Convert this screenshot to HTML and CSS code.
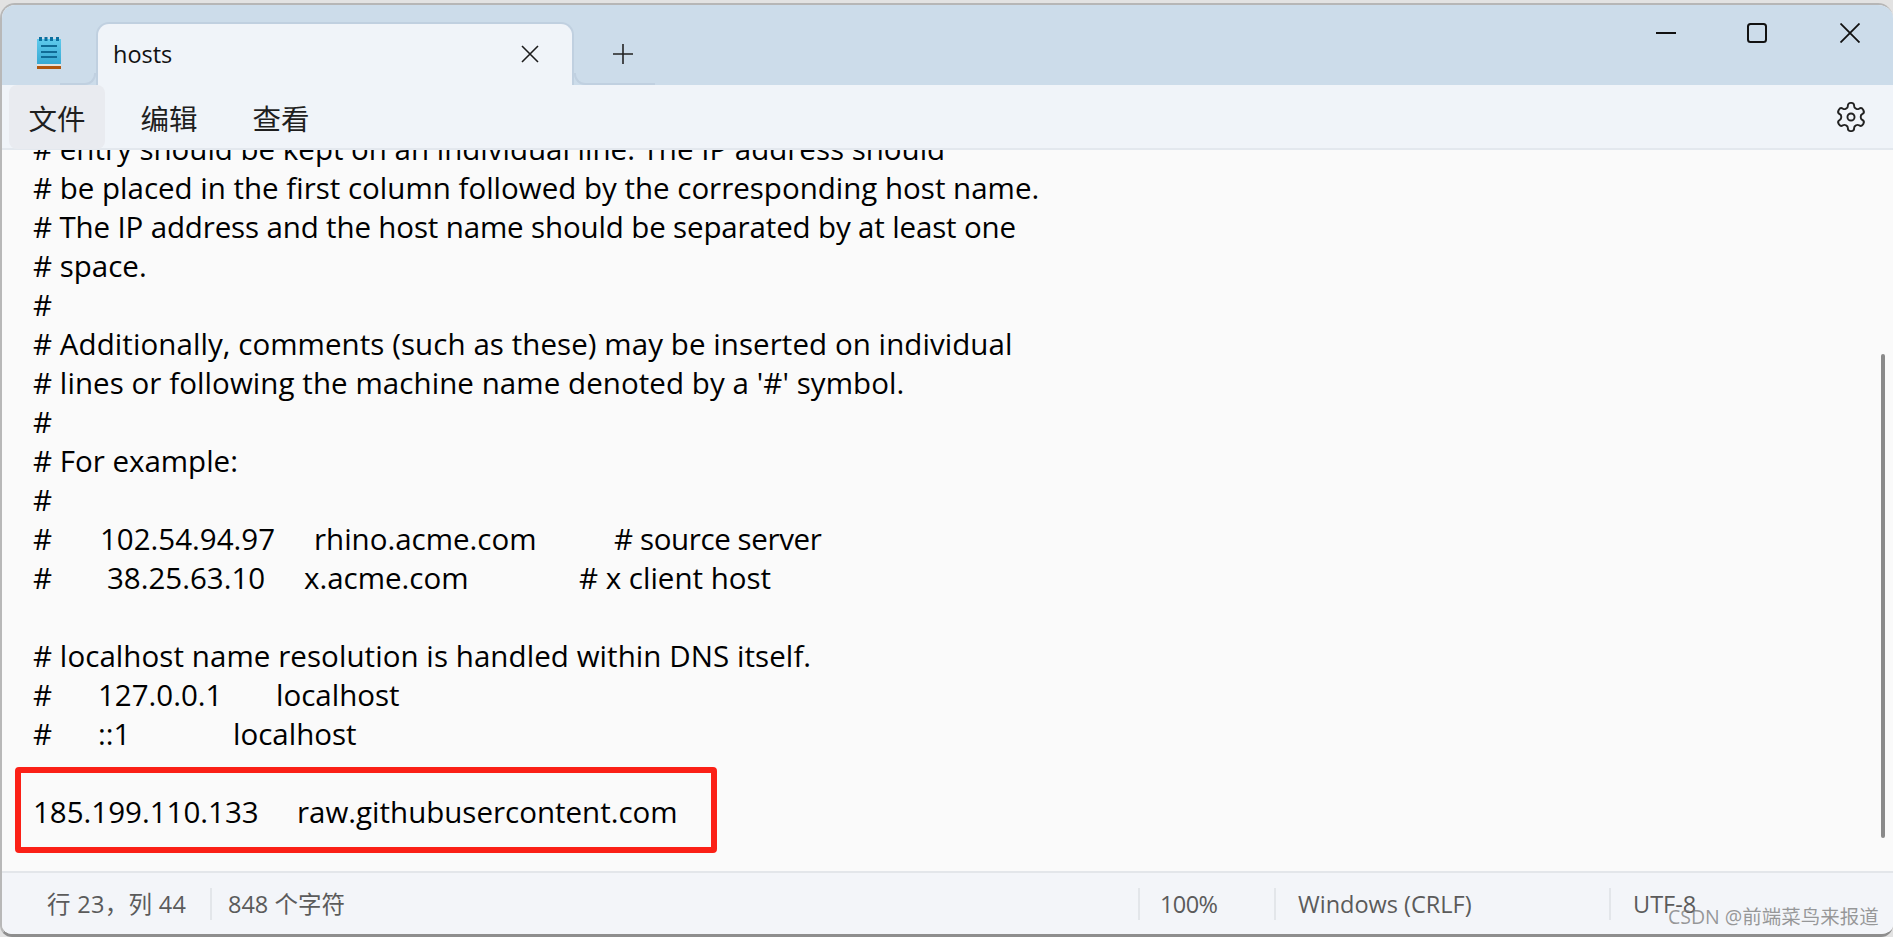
FILE: index.html
```html
<!DOCTYPE html>
<html lang="zh">
<head>
<meta charset="utf-8">
<title>hosts</title>
<link rel="stylesheet" href="styles.css">
</head>
<body>
<div class="window">
  <header class="titlebar">
    <svg class="app-icon" width="24" height="32" viewBox="0 0 24 32">
      <defs><linearGradient id="pad" x1="0" y1="0" x2="0" y2="1"><stop offset="0" stop-color="#5fcaec"/><stop offset="1" stop-color="#37a9d3"/></linearGradient></defs>
      <rect x="0" y="2" width="24" height="25" fill="url(#pad)"/>
      <rect x="2" y="0" width="3" height="4" fill="#0c6f9e"/>
      <rect x="7.5" y="0" width="3" height="4" fill="#0c6f9e"/>
      <rect x="13" y="0" width="3" height="4" fill="#0c6f9e"/>
      <rect x="19" y="0" width="3" height="4" fill="#0c6f9e"/>
      <rect x="4" y="8" width="16" height="2" fill="#0f6b96"/>
      <rect x="4" y="14" width="16" height="2" fill="#0f6b96"/>
      <rect x="4" y="19" width="16" height="2" fill="#0f6b96"/>
      <rect x="0" y="27" width="24" height="2" fill="#e6e2dc"/>
      <rect x="0" y="29" width="24" height="3" fill="#b0560f"/>
    </svg>
    <div class="tab">
      <span class="ear ear-left"></span>
      <span class="tab-title">hosts</span>
      <svg class="tab-close" width="18" height="18" viewBox="0 0 18 18"><path d="M1 1l16 16M17 1L1 17" fill="none" stroke="#1c1c1c" stroke-width="1.6"/></svg>
      <span class="ear ear-right"></span>
    </div>
    <svg class="tab-add" width="20" height="20" viewBox="0 0 20 20"><path d="M0 10h20M10 0v20" fill="none" stroke="#222" stroke-width="1.6"/></svg>
    <div class="controls">
      <svg class="ctl ctl-min" width="20" height="20" viewBox="0 0 20 20"><path d="M0 10h20" fill="none" stroke="#111" stroke-width="2"/></svg>
      <svg class="ctl ctl-max" width="20" height="20" viewBox="0 0 20 20"><rect x="1" y="1" width="18" height="18" rx="2.5" fill="none" stroke="#111" stroke-width="2"/></svg>
      <svg class="ctl ctl-close" width="20" height="20" viewBox="0 0 20 20"><path d="M.5.5l19 19M19.500.5l-19 19" fill="none" stroke="#111" stroke-width="1.8"/></svg>
    </div>
  </header>
  <nav class="menubar">
    <span class="menu-item active">文件</span>
    <span class="menu-item">编辑</span>
    <span class="menu-item">查看</span>
    <svg class="gear" width="34" height="34" viewBox="0 0 24 24" fill="none" stroke="#222" stroke-width="1.35" stroke-linecap="round" stroke-linejoin="round"><path d="M12.220 2h-.440a2 2 0 0 0-2 2v.180a2 2 0 0 1-1 1.730l-.430.250a2 2 0 0 1-2 0l-.150-.080a2 2 0 0 0-2.730.730l-.220.380a2 2 0 0 0 .730 2.730l.150.100a2 2 0 0 1 1 1.720v.510a2 2 0 0 1-1 1.740l-.150.090a2 2 0 0 0-.730 2.730l.220.380a2 2 0 0 0 2.730.730l.150-.080a2 2 0 0 1 2 0l.430.250a2 2 0 0 1 1 1.730V20a2 2 0 0 0 2 2h.440a2 2 0 0 0 2-2v-.180a2 2 0 0 1 1-1.730l.430-.250a2 2 0 0 1 2 0l.150.080a2 2 0 0 0 2.730-.730l.220-.390a2 2 0 0 0-.730-2.730l-.150-.080a2 2 0 0 1-1-1.740v-.500a2 2 0 0 1 1-1.740l.150-.090a2 2 0 0 0 .730-2.730l-.220-.380a2 2 0 0 0-2.730-.730l-.150.080a2 2 0 0 1-2 0l-.430-.250a2 2 0 0 1-1-1.730V4a2 2 0 0 0-2-2z"/><circle cx="12" cy="12" r="2.500"/></svg>
  </nav>
  <main class="editor">
    <div class="text">
      <div class="line"># entry should be kept on an individual line. The IP address should</div>
      <div class="line"># be placed in the first column followed by the corresponding host name.</div>
      <div class="line tight"># The IP address and the host name should be separated by at least one</div>
      <div class="line"># space.</div>
      <div class="line">#</div>
      <div class="line loose"># Additionally, comments (such as these) may be inserted on individual</div>
      <div class="line loose"># lines or following the machine name denoted by a '#' symbol.</div>
      <div class="line">#</div>
      <div class="line"># For example:</div>
      <div class="line">#</div>
      <div class="line cols cols-rhino"><span>#</span><span>102.54.94.97</span><span>rhino.acme.com</span><span class="narrow"># source server</span></div>
      <div class="line cols cols-xacme"><span>#</span><span>38.25.63.10</span><span>x.acme.com</span><span># x client host</span></div>
      <div class="line"> </div>
      <div class="line loose"># localhost name resolution is handled within DNS itself.</div>
      <div class="line cols cols-v4"><span>#</span><span>127.0.0.1</span><span>localhost</span></div>
      <div class="line cols cols-v6"><span>#</span><span>::1</span><span>localhost</span></div>
      <div class="line"> </div>
      <div class="line cols cols-entry"><span>185.199.110.133</span><span>raw.githubusercontent.com</span></div>
    </div>
    <div class="highlight"></div>
    <div class="scrollbar"></div>
  </main>
  <footer class="statusbar">
    <span class="cell cell-pos">行 23，列 44</span>
    <span class="cell cell-count">848 个字符</span>
    <span class="cell cell-zoom">100%</span>
    <span class="cell cell-eol">Windows (CRLF)</span>
    <span class="cell cell-enc">UTF-8</span>
  </footer>
</div>
<div class="watermark">CSDN @前端菜鸟来报道</div>
</body>
</html>
```

FILE: styles.css
```css
* { box-sizing: border-box; }
html, body { margin: 0; height: 100%; overflow: hidden; }
body { background: #e2e2e2; padding-top: 3px; position: relative; font-family: "Open Sans", "Noto Sans CJK SC", sans-serif; color: #000; }
.window {
  height: 934px;
  display: flex;
  flex-direction: column;
  border-top: 2px solid #b6b6b6;
  border-left: 2px solid #b8b8b8;
  border-bottom: 3px solid #8e8e8e;
  border-radius: 15px 15px 12px 12px;
  overflow: hidden;
  background: #fafafa;
}
.titlebar {
  height: 80px;
  flex: none;
  display: flex;
  align-items: flex-start;
  background: #ccdcea;
  position: relative;
}
.app-icon { margin: 32px 0 0 35px; flex: none; }
.tab {
  width: 478px;
  height: 63px;
  margin: 17px 0 0 35px;
  flex: none;
  display: flex;
  align-items: center;
  justify-content: space-between;
  background: #f0f4f9;
  border: 2px solid #c0d0e0;
  border-bottom: 0;
  border-radius: 13px 13px 0 0;
  padding: 0 33px 0 15px;
  position: relative;
}
.tab-title { font-size: 23.5px; line-height: 30px; color: #111; margin-top: -1px; }
.tab-close { margin-top: -1px; }
.ear { position: absolute; bottom: 0; height: 12px; border-bottom: 2px solid #c0d0e0; }
.ear-left { left: -38px; width: 36px; border-right: 2px solid #c0d0e0; border-bottom-right-radius: 11px; }
.ear-right { right: -83px; width: 81px; border-left: 2px solid #c0d0e0; border-bottom-left-radius: 11px; }
.tab-add { margin: 39px 0 0 39px; flex: none; }
.controls { margin-left: auto; display: flex; gap: 71px; padding: 18px 33px 0 0; }
.ctl-max { margin-right: 2px; }
.menubar {
  height: 65px;
  flex: none;
  display: flex;
  align-items: stretch;
  background: #f0f4f9;
  border-bottom: 2px solid #e3e8ee;
  padding-left: 7px;
  position: relative;
  z-index: 2;
}
.menu-item {
  width: 96px;
  margin-right: 16px;
  height: 64px;
  font-size: 28.5px;
  line-height: 68px;
  text-align: center;
  color: #1f1f1f;
  border-radius: 8px;
}
.menu-item.active { background: #e9ebf0; }
.gear { position: absolute; right: 25px; top: 15px; }
.editor { flex: 1; position: relative; overflow: hidden; background: #fafafa; }
.text { margin-top: -21px; padding-left: 31px; font-size: 29.5px; line-height: 39px; }
.line { white-space: pre; height: 39px; }
.tight { letter-spacing: -0.14px; }
.loose { letter-spacing: 0.07px; }
.narrow { letter-spacing: -0.38px; }
.cols { display: grid; }
.cols-rhino { grid-template-columns: 67px 214px 300px 1fr; }
.cols-xacme { grid-template-columns: 74px 197px 275px 1fr; }
.cols-v4 { grid-template-columns: 65px 178px 1fr; }
.cols-v6 { grid-template-columns: 65px 135px 1fr; }
.cols-entry { grid-template-columns: 264px 1fr; }
.highlight {
  position: absolute;
  left: 13px;
  top: 617px;
  width: 702px;
  height: 86px;
  border: 6px solid #fb2016;
  border-radius: 4px;
}
.scrollbar {
  position: absolute;
  right: 8px;
  top: 204px;
  width: 4px;
  height: 484px;
  background: #8a8a8a;
  border-radius: 2px;
}
.statusbar {
  height: 63px;
  flex: none;
  display: grid;
  grid-template-columns: 208px 928px 136px 335px 1fr;
  align-items: center;
  background: #f3f5f9;
  border-top: 2px solid #e3e6ea;
  font-size: 23.5px;
  color: #5b5b5b;
}
.cell { height: 32px; line-height: 32px; padding-left: 22px; border-left: 2px solid #e3e6ea; white-space: nowrap; }
.cell-pos { padding-left: 45px; border-left: 0; letter-spacing: 0.3px; }
.cell-count { padding-left: 16px; }
.cell-zoom { padding-left: 20px; letter-spacing: -0.6px; }
.watermark {
  position: absolute;
  left: 1668px;
  top: 904px;
  font-size: 19.5px;
  line-height: 26px;
  color: rgba(120, 120, 120, .75);
  white-space: nowrap;
}
```
